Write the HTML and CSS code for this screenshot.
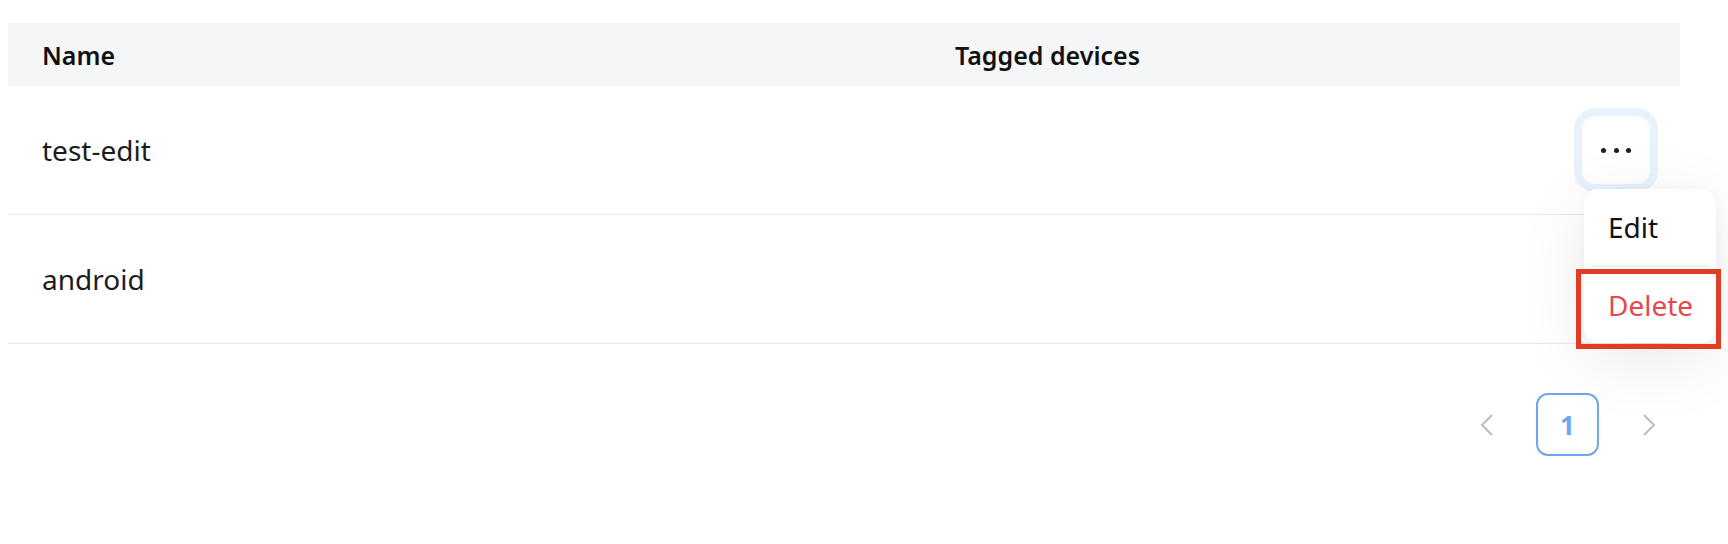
FILE: index.html
```html
<!DOCTYPE html>
<html lang="en">
<head>
<meta charset="utf-8">
<title>Tags</title>
<link rel="stylesheet" href="styles.css">
</head>
<body>
<div class="page">
  <div class="tbl">
    <div class="row head">
      <div class="cell name">Name</div>
      <div class="cell tagged">Tagged devices</div>
      <div class="cell actions"></div>
    </div>
    <div class="row">
      <div class="cell name">test-edit</div>
      <div class="cell tagged"></div>
      <div class="cell actions">
        <div class="dropdown">
          <button class="more" type="button" aria-label="More">
            <span class="dot"></span><span class="dot"></span><span class="dot"></span>
          </button>
          <div class="menu">
            <div class="item">Edit</div>
            <div class="sep"></div>
            <div class="item danger">Delete</div>
            <div class="highlight"></div>
          </div>
        </div>
      </div>
    </div>
    <div class="row">
      <div class="cell name">android</div>
      <div class="cell tagged"></div>
      <div class="cell actions"></div>
    </div>
  </div>
  <div class="pager">
    <span class="pg arrow">
      <svg width="14" height="22" viewBox="0 0 14 22"><polyline points="12,1 2,11 12,21" fill="none" stroke="#bdbdbd" stroke-width="2"/></svg>
    </span>
    <span class="pg current">1</span>
    <span class="pg arrow">
      <svg width="14" height="22" viewBox="0 0 14 22"><polyline points="2,1 12,11 2,21" fill="none" stroke="#bdbdbd" stroke-width="2"/></svg>
    </span>
  </div>
</div>
</body>
</html>
```
FILE: styles.css
```css
* { box-sizing: border-box; }
html, body { margin: 0; padding: 0; background: #fff; }
body {
  font-family: "Noto Sans", "Open Sans", Arial, sans-serif;
  color: #1c1c1e;
}
.page {
  padding: 23px 48px 0 8px;
}
.tbl {
  width: 1672px;
}
.row {
  display: grid;
  grid-template-columns: 913px 1fr 128px;
  align-items: center;
  height: 129px;
  border-bottom: 1px solid #e9e9eb;
}
.row.head {
  height: 63px;
  background: #f5f6f8;
  border-bottom: none;
}
.row.last {
  height: 130px;
}
.cell {
  padding-left: 34px;
}
.head .cell {
  font-size: 25px;
  font-weight: 600;
  color: #111;
}
.row .cell.name {
  font-size: 28px;
}
.head .cell.name { font-size: 25px; }
.actions {
  display: flex;
  justify-content: flex-end;
  padding-right: 30px;
}
.dropdown {
  position: relative;
  width: 68px;
  height: 68px;
}
.more {
  width: 68px;
  height: 68px;
  border: none;
  border-radius: 13px;
  background: #fff;
  box-shadow: 0 0 0 8px #e8f2fc;
  display: flex;
  align-items: center;
  justify-content: center;
  gap: 7.5px;
  padding: 0;
  cursor: pointer;
}
.dot {
  width: 5px;
  height: 5px;
  border-radius: 50%;
  background: #1e1e1e;
}
.menu {
  position: absolute;
  top: 73px;
  right: -66px;
  width: 132px;
  height: 154px;
  background: #fff;
  border-radius: 14px;
  box-shadow: 0 16px 70px rgba(0, 0, 0, 0.09), 0 2px 10px rgba(0, 0, 0, 0.04);
  display: flex;
  flex-direction: column;
  z-index: 5;
}
.item {
  height: 76px;
  display: flex;
  align-items: center;
  padding-left: 24px;
  font-size: 28px;
  color: #111;
}
.item.danger {
  color: #e5484d;
}
.sep {
  height: 2px;
  margin: 0 8px;
  background: #efefef;
}
.highlight {
  position: absolute;
  left: -8px;
  top: 80px;
  width: 145px;
  height: 80px;
  border: 5px solid #e23b26;
  pointer-events: none;
}
.pager {
  width: 1672px;
  margin-top: 49px;
  display: flex;
  justify-content: flex-end;
  gap: 18px;
}
.pg {
  width: 63px;
  height: 63px;
  display: flex;
  align-items: center;
  justify-content: center;
}
.pg.current {
  border: 2.5px solid #6da7e9;
  border-radius: 12px;
  color: #6da7e9;
  font-weight: 700;
  font-size: 26px;
}
```
